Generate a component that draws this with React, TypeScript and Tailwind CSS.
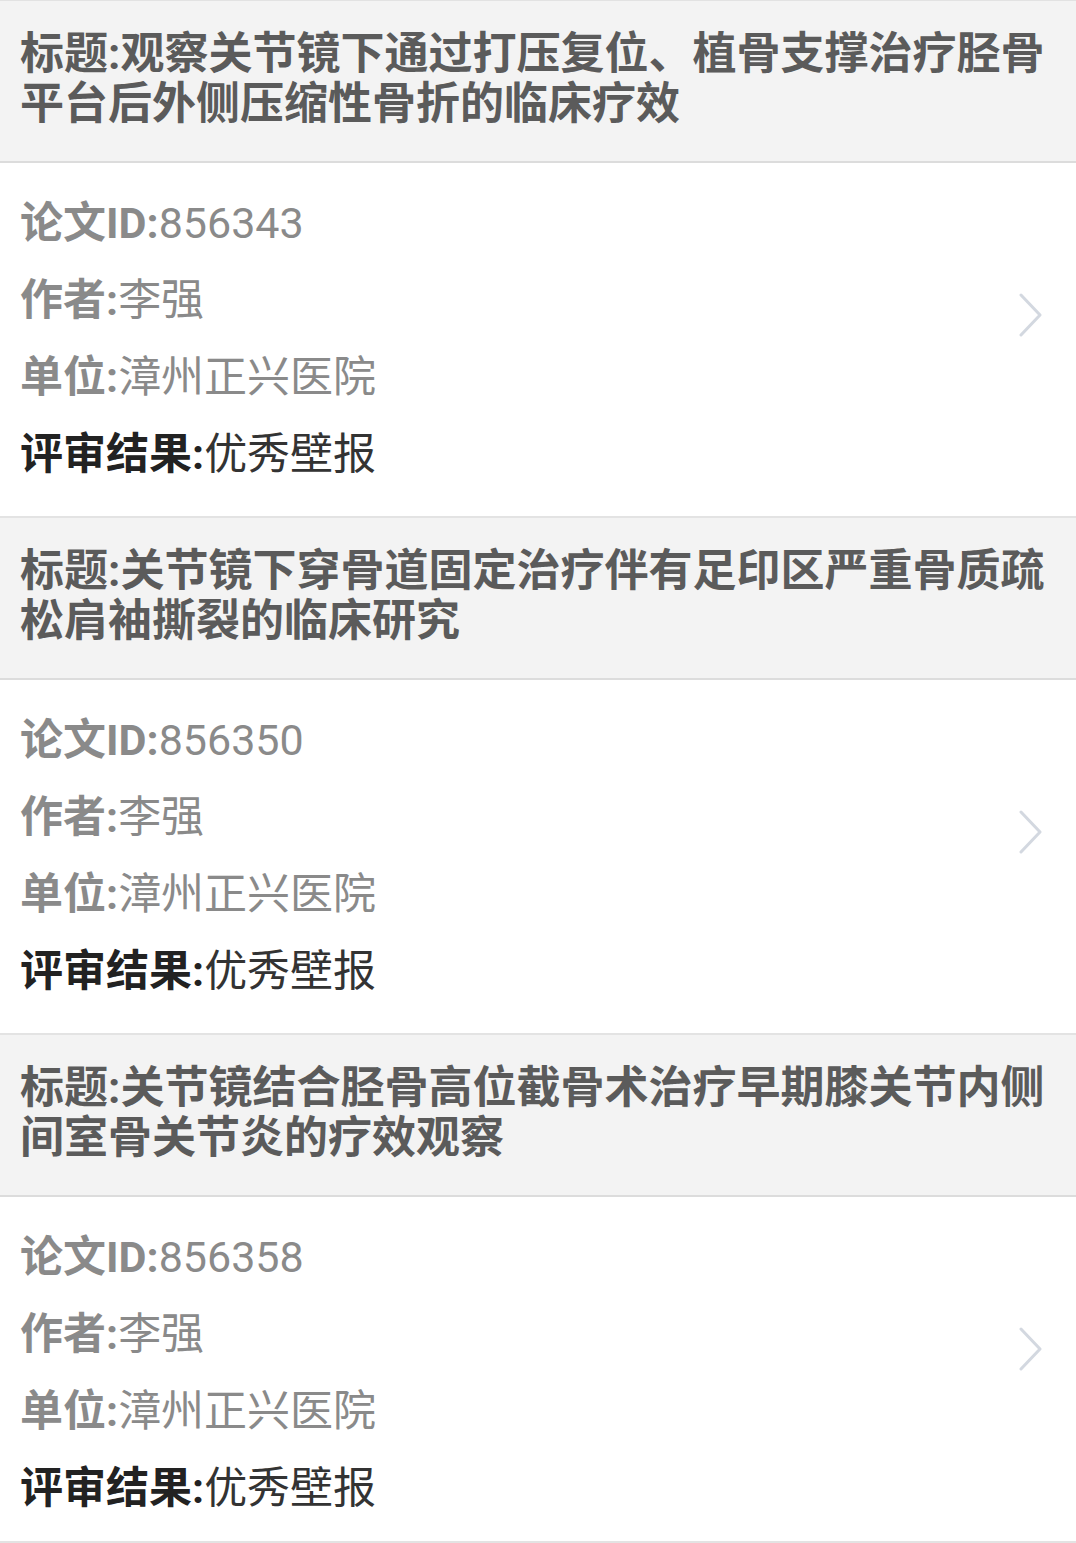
import React from "react";

type Item = { title: string; id: string; author: string; unit: string; result: string };

const items: Item[] = [
  {
    title: "观察关节镜下通过打压复位、植骨支撑治疗胫骨平台后外侧压缩性骨折的临床疗效",
    id: "856343",
    author: "李强",
    unit: "漳州正兴医院",
    result: "优秀壁报",
  },
  {
    title: "关节镜下穿骨道固定治疗伴有足印区严重骨质疏松肩袖撕裂的临床研究",
    id: "856350",
    author: "李强",
    unit: "漳州正兴医院",
    result: "优秀壁报",
  },
  {
    title: "关节镜结合胫骨高位截骨术治疗早期膝关节内侧间室骨关节炎的疗效观察",
    id: "856358",
    author: "李强",
    unit: "漳州正兴医院",
    result: "优秀壁报",
  },
];

function Chevron() {
  return (
    <svg width="26" height="44" viewBox="0 0 26 44" fill="none">
      <polyline
        points="3,2 22,22 3,42"
        stroke="#d3d8e0"
        strokeWidth="3"
        strokeLinecap="round"
        strokeLinejoin="round"
      />
    </svg>
  );
}

function Card({ item, last }: { item: Item; last: boolean }) {
  return (
    <div>
      <div className="bg-[#f3f3f3] pl-[20px] pr-[20px] pt-[28px] pb-[32px] border-b-2 border-[#dcdcdc]">
        <div className="text-[44px] leading-[50px] font-bold text-[#5b5b5b]">标题:{item.title}</div>
      </div>
      <div
        className={
          "bg-white flex flex-row pl-[20px] pr-[32px] pt-[22px] border-b-2 border-[#e3e3e3] " +
          (last ? "pb-[14px]" : "pb-[23px]")
        }
      >
        <div className="flex-1 flex flex-col text-[43px] leading-[77px]">
          <div className="text-[#8a8a8a]">
            <span className="font-bold">论文ID:</span>
            <span>{item.id}</span>
          </div>
          <div className="text-[#8a8a8a]">
            <span className="font-bold">作者:</span>
            <span>{item.author}</span>
          </div>
          <div className="text-[#8a8a8a]">
            <span className="font-bold">单位:</span>
            <span>{item.unit}</span>
          </div>
          <div>
            <span className="font-bold text-[#222222]">评审结果:</span>
            <span className="text-[#333333]">{item.result}</span>
          </div>
        </div>
        <div className="mt-[108px] self-start">
          <Chevron />
        </div>
      </div>
    </div>
  );
}

export default function App() {
  return (
    <div
      className="w-[1076px] bg-white border-t border-[#e2e2e2]"
      style={{ fontFamily: "Roboto, 'Noto Sans CJK SC', 'Noto Sans', sans-serif" }}
    >
      {items.map((it, i) => (
        <Card key={it.id} item={it} last={i === items.length - 1} />
      ))}
    </div>
  );
}
